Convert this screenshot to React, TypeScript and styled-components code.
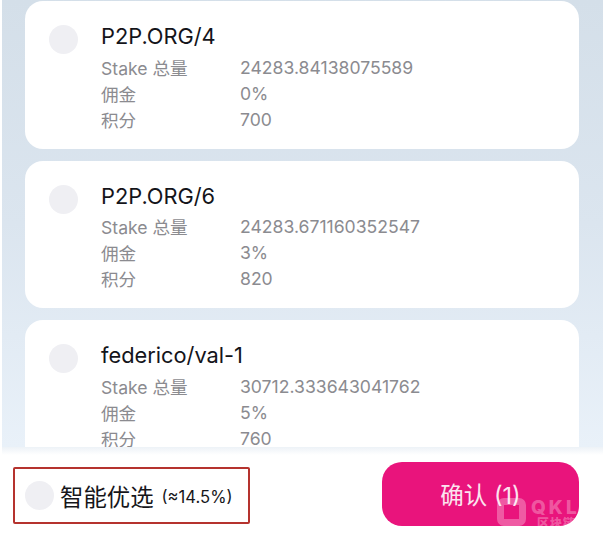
import styled, { createGlobalStyle } from "styled-components";

const FONT = `Inter, "Noto Sans CJK SC", "Noto Sans", sans-serif`;

interface Validator {
  name: string;
  stake: string;
  commission: string;
  points: string;
}

const validators: Validator[] = [
  { name: "P2P.ORG/4", stake: "24283.84138075589", commission: "0%", points: "700" },
  { name: "P2P.ORG/6", stake: "24283.671160352547", commission: "3%", points: "820" },
  { name: "federico/val-1", stake: "30712.333643041762", commission: "5%", points: "760" },
];

const GlobalStyle = createGlobalStyle`
  html, body {
    margin: 0;
    padding: 0;
    background: #fff;
  }
  body {
    font-family: ${FONT};
  }
`;

const Page = styled.div`
  width: 606px;
  height: 534px;
  padding: 0 3px 0 2px;
  box-sizing: border-box;
  display: flex;
  flex-direction: column;
  overflow: hidden;
`;

const List = styled.div`
  height: 447px;
  flex: none;
  overflow: hidden;
  padding: 1px 24px 0 23px;
  box-sizing: border-box;
  display: flex;
  flex-direction: column;
  gap: 12px;
  background: linear-gradient(180deg, #d4dfe9 0%, #dbe5ef 50%, #e9f1f9 100%);
`;

const Card = styled.div`
  flex: none;
  height: 147.5px;
  border-radius: 18px;
  background: #fff;
  padding: 22px 24px 0 24px;
  box-sizing: border-box;
  display: flex;
  gap: 23px;
`;

const Radio = styled.span`
  flex: none;
  width: 29px;
  height: 29px;
  border-radius: 50%;
  background: #efeff3;
`;

const CardRadio = styled(Radio)`
  margin-top: 2px;
`;

const CardBody = styled.div`
  display: flex;
  flex-direction: column;
`;

const Name = styled.div`
  font-size: 21.8px;
  line-height: 26px;
  color: #14141a;
  margin-bottom: 5px;
`;

const Stats = styled.div`
  display: grid;
  grid-template-columns: 139px 1fr;
  grid-auto-rows: 26px;
  align-items: center;
  font-size: 17.6px;
  color: #8b8b90;
`;

const Footer = styled.div`
  flex: 1;
  display: flex;
  align-items: flex-start;
  justify-content: space-between;
  background: linear-gradient(180deg, #edf2f7 0, #fff 8px);
  padding: 15px 24px 0 11px;
`;

const SmartPick = styled.div`
  width: 237px;
  height: 57px;
  margin-top: 5px;
  box-sizing: border-box;
  border: 2px solid #b5332e;
  border-radius: 2px;
  padding-left: 10px;
  display: flex;
  align-items: center;
  gap: 6px;
`;

const SmartLabel = styled.span`
  font-size: 23.4px;
  color: #16161a;
`;

const SmartRate = styled.span`
  font-size: 16.6px;
  color: #16161a;
  margin-left: 2px;
  margin-top: 3px;
`;

const ConfirmButton = styled.button`
  position: relative;
  width: 197px;
  height: 64px;
  border: none;
  border-radius: 20px;
  background: #e9147c;
  color: #fbe4ef;
  font-family: ${FONT};
  font-size: 23.5px;
  padding: 0;
  overflow: hidden;
`;

const Watermark = styled.span`
  position: absolute;
  left: 115px;
  top: 36px;
  display: flex;
  gap: 5px;
  color: rgba(255, 255, 255, 0.3);
  font-weight: 800;
`;

const WatermarkMark = styled.span`
  flex: none;
  width: 29px;
  height: 28px;
  box-sizing: border-box;
  border: 7px solid rgba(255, 255, 255, 0.3);
  border-radius: 7px;
`;

const WatermarkText = styled.span`
  display: flex;
  flex-direction: column;
  align-items: flex-start;
  padding-top: 1px;
  font-size: 19px;
  line-height: 18px;
  letter-spacing: 3px;
  white-space: nowrap;
`;

const WatermarkSub = styled.span`
  font-size: 12px;
  line-height: 13px;
  letter-spacing: 1px;
  margin-left: 6px;
`;

export default function App() {
  return (
    <>
      <GlobalStyle />
      <Page>
        <List>
          {validators.map((v) => (
            <Card key={v.name}>
              <CardRadio />
              <CardBody>
                <Name>{v.name}</Name>
                <Stats>
                  <span>Stake 总量</span>
                  <span>{v.stake}</span>
                  <span>佣金</span>
                  <span>{v.commission}</span>
                  <span>积分</span>
                  <span>{v.points}</span>
                </Stats>
              </CardBody>
            </Card>
          ))}
        </List>
        <Footer>
          <SmartPick>
            <Radio />
            <SmartLabel>智能优选</SmartLabel>
            <SmartRate>(≈14.5%)</SmartRate>
          </SmartPick>
          <ConfirmButton>
            确认 (1)
            <Watermark>
              <WatermarkMark />
              <WatermarkText>
                QKL
                <WatermarkSub>区块链</WatermarkSub>
              </WatermarkText>
            </Watermark>
          </ConfirmButton>
        </Footer>
      </Page>
    </>
  );
}
